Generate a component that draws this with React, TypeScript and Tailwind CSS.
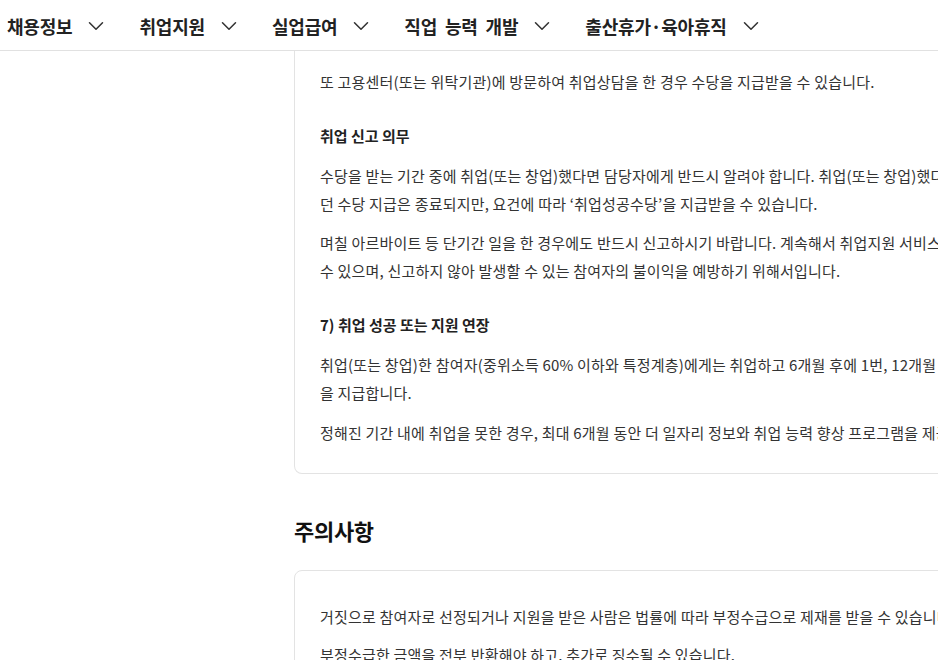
import { ChevronDown } from 'lucide-react';

const menu = ['채용정보', '취업지원', '실업급여', '직업 능력 개발', '출산휴가·육아휴직'];

function Para({ lines, className = '' }: { lines: string[]; className?: string }) {
  return (
    <p className={'whitespace-nowrap text-[15px] leading-[28px] tracking-[0.2px] text-[#333] ' + className}>
      {lines.map((l, i) => (
        <span key={i} className="block">{l}</span>
      ))}
    </p>
  );
}

function SubTitle({ children }: { children: string }) {
  return <h4 className="mt-[26px] whitespace-nowrap text-[15px] font-bold leading-[28px] text-[#222]">{children}</h4>;
}

export default function App() {
  return (
    <div
      className="h-[660px] w-[938px] overflow-hidden bg-white"
      style={{ fontFamily: '"Noto Sans CJK KR", "Noto Sans", sans-serif' }}
    >
      <header className="flex h-[51px] items-center gap-[30px] border-b border-[#e1e1e1] pl-[7px] pt-[2px]">
        {menu.map(m => (
          <div key={m} className="flex items-center gap-[11px]">
            <span className="whitespace-nowrap text-[18px] font-bold tracking-[-0.2px] text-[#222] [word-spacing:4px]">{m}</span>
            <ChevronDown size={26} strokeWidth={1.4} className="text-[#333]" />
          </div>
        ))}
      </header>

      <div className="flex">
        <aside className="w-[294px] shrink-0" />
        <main className="w-[760px] shrink-0">
          <section className="rounded-b-[8px] border-x border-b border-[#e3e3e3] px-[25px] pb-[26px] pt-[17px]">
            <Para lines={['또 고용센터(또는 위탁기관)에 방문하여 취업상담을 한 경우 수당을 지급받을 수 있습니다.']} />

            <SubTitle>취업 신고 의무</SubTitle>
            <Para
              className="mt-[12px]"
              lines={[
                '수당을 받는 기간 중에 취업(또는 창업)했다면 담당자에게 반드시 알려야 합니다. 취업(또는 창업)했다면 받고 있',
                '던 수당 지급은 종료되지만, 요건에 따라 ‘취업성공수당’을 지급받을 수 있습니다.',
              ]}
            />
            <Para
              className="mt-[11px]"
              lines={[
                '며칠 아르바이트 등 단기간 일을 한 경우에도 반드시 신고하시기 바랍니다. 계속해서 취업지원 서비스를 받을',
                '수 있으며, 신고하지 않아 발생할 수 있는 참여자의 불이익을 예방하기 위해서입니다.',
              ]}
            />

            <SubTitle>7) 취업 성공 또는 지원 연장</SubTitle>
            <Para
              className="mt-[12px]"
              lines={[
                '취업(또는 창업)한 참여자(중위소득 60% 이하와 특정계층)에게는 취업하고 6개월 후에 1번, 12개월 후에 1번 취업성공수당',
                '을 지급합니다.',
              ]}
            />
            <Para
              className="mt-[12px]"
              lines={['정해진 기간 내에 취업을 못한 경우, 최대 6개월 동안 더 일자리 정보와 취업 능력 향상 프로그램을 제공합니다.']}
            />
          </section>

          <h3 className="mt-[40px] text-[22px] font-bold leading-[32px] tracking-[-0.3px] text-[#111]">주의사항</h3>

          <section className="mt-[24px] rounded-[8px] border border-[#e3e3e3] px-[25px] pb-[26px] pt-[32px]">
            <Para lines={['거짓으로 참여자로 선정되거나 지원을 받은 사람은 법률에 따라 부정수급으로 제재를 받을 수 있습니다.']} />
            <Para className="mt-[10px]" lines={['부정수급한 금액을 전부 반환해야 하고, 추가로 징수될 수 있습니다.']} />
          </section>
        </main>
      </div>
    </div>
  );
}
